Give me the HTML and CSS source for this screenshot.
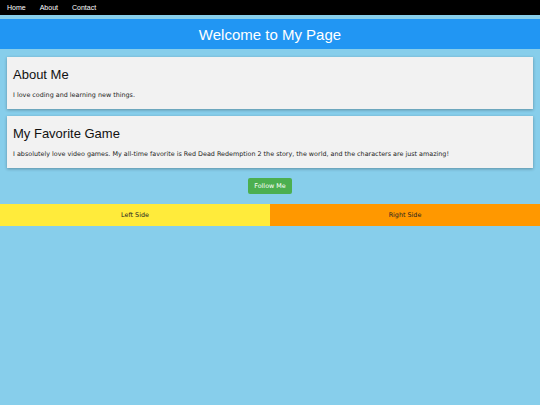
FILE: index.html
```html
<!DOCTYPE html>
<html lang="en">
<head>
<meta charset="utf-8">
<title>Welcome to My Page</title>
<link rel="stylesheet" href="styles.css">
</head>
<body>
<nav class="topnav">
  <a class="nav-link" href="#">Home</a>
  <a class="nav-link" href="#">About</a>
  <a class="nav-link" href="#">Contact</a>
</nav>
<header class="site-header">
  <h1 class="site-title">Welcome to My Page</h1>
</header>
<main class="content">
  <section class="card">
    <h2 class="card-title">About Me</h2>
    <p class="card-text">I love coding and learning new things.</p>
  </section>
  <section class="card">
    <h2 class="card-title">My Favorite Game</h2>
    <p class="card-text">I absolutely love video games. My all-time favorite is Red Dead Redemption 2 the story, the world, and the characters are just amazing!</p>
  </section>
</main>
<div class="actions">
  <button class="follow-btn" type="button">Follow Me</button>
</div>
<div class="split">
  <div class="side side-left">Left Side</div>
  <div class="side side-right">Right Side</div>
</div>
</body>
</html>
```
FILE: styles.css
```css
html, body {
  margin: 0;
  padding: 0;
}
body {
  background: #87ceeb;
  font-family: "DejaVu Sans", Verdana, sans-serif;
  color: #222;
}
.topnav {
  background: #000;
  height: 15px;
  display: flex;
}
.nav-link {
  color: #fff;
  text-decoration: none;
  font-family: "Liberation Sans", Arial, sans-serif;
  font-size: 7px;
  line-height: 15px;
  padding: 0 7px;
}
.site-header {
  background: #2196f3;
  margin-top: 4px;
  height: 30px;
  display: flex;
  align-items: center;
  justify-content: center;
}
.site-title {
  margin: 0;
  color: #fff;
  font-family: "Liberation Sans", Arial, sans-serif;
  font-weight: normal;
  font-size: 15px;
  line-height: 17px;
}
.content {
  padding: 8px 7px 0;
  display: flex;
  flex-direction: column;
  gap: 7px;
}
.card {
  background: #f2f2f2;
  box-shadow: 0 1px 3px rgba(0, 0, 0, 0.3);
  padding: 7px 6px 10px;
}
.card-title {
  margin: 3px 0 9px;
  font-family: "Liberation Sans", Arial, sans-serif;
  font-weight: normal;
  font-size: 13px;
  line-height: 15px;
  color: #111;
}
.card-text {
  margin: 0;
  font-size: 6.4px;
  line-height: 8px;
  color: #222;
}
.actions {
  display: flex;
  justify-content: center;
  padding-top: 10px;
}
.follow-btn {
  background: #4caf50;
  color: #fff;
  border: none;
  border-radius: 2px;
  font-family: "DejaVu Sans", Verdana, sans-serif;
  font-size: 6.4px;
  height: 16px;
  padding: 0 6px;
}
.split {
  display: flex;
  margin-top: 10px;
}
.side {
  flex: 1;
  height: 22px;
  display: flex;
  align-items: center;
  justify-content: center;
  font-size: 6.4px;
  color: #222;
}
.side-left {
  background: #ffeb3b;
}
.side-right {
  background: #ff9800;
}
```
